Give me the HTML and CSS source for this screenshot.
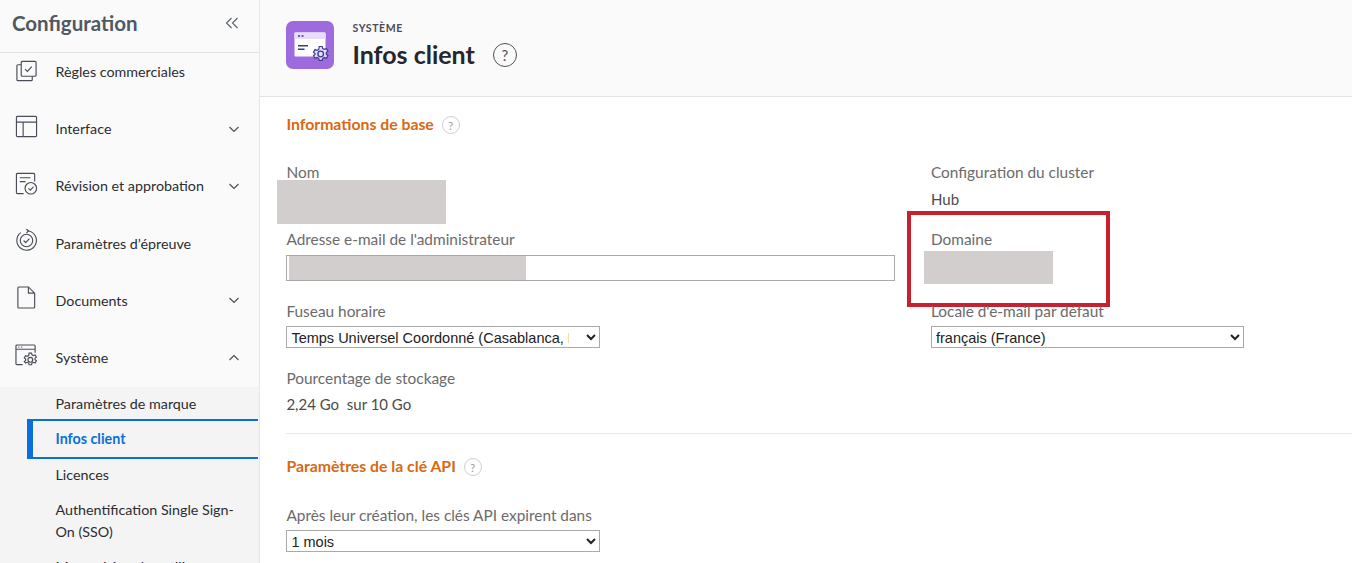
FILE: index.html
```html
<!DOCTYPE html>
<html lang="fr">
<head>
    <meta charset="UTF-8">
    <meta name="viewport" content="width=device-width, initial-scale=1.0">
    <title>Infos client</title>
    <link rel="stylesheet" href="styles.css">
</head>
<body>
    <aside class="sidebar">
        <div class="sidebar-head">
            <h2>Configuration</h2>
            <svg class="collapse" width="14" height="14" viewBox="0 0 14 14"><path d="M6.5 2 1.5 7l5 5M12.5 2l-5 5 5 5"/></svg>
        </div>
        <div class="sidebar-scroll">
            <ul class="nav">
                <li class="nav-item">
                    <svg class="nav-icon nav-icon-first" viewBox="0 0 24 24"><rect x="6.500" y="1.500" width="15.500" height="15.500" rx="1"/><path d="M6.500 5H3a1 1 0 0 0-1 1v14.500a1 1 0 0 0 1 1h14a1 1 0 0 0 1-1V17M10.500 9.500l2.500 2.500 4.500-5"/></svg>
                    <span>Règles commerciales</span>
                </li>
                <li class="nav-item">
                    <svg class="nav-icon" viewBox="0 0 24 24"><rect x="1.500" y="1.500" width="21" height="21" rx="1"/><path d="M1.500 7.500h21M8.500 7.500v15"/></svg>
                    <span>Interface</span>
                    <svg class="chev" viewBox="0 0 12 12"><path d="M1.500 4 6 8.500 10.500 4"/></svg>
                </li>
                <li class="nav-item">
                    <svg class="nav-icon" viewBox="0 0 24 24"><path d="M9 22.500H2.500a1 1 0 0 1-1-1v-19a1 1 0 0 1 1-1h17a1 1 0 0 1 1 1V10M5 6h11M5 10h6"/><circle cx="16.500" cy="17" r="6"/><path d="m14 17 2 2 3.200-3.500"/></svg>
                    <span>Révision et approbation</span>
                    <svg class="chev" viewBox="0 0 12 12"><path d="M1.500 4 6 8.500 10.500 4"/></svg>
                </li>
                <li class="nav-item">
                    <svg class="nav-icon" viewBox="0 0 24 24"><path d="M13 1.800A10.200 10.200 0 1 1 6 3.800"/><path d="m11.500-.2 2.500 2-2 2.500"/><circle cx="12" cy="12" r="6.500"/><path d="m9 12 2.200 2.200L15 10"/></svg>
                    <span>Paramètres d’épreuve</span>
                </li>
                <li class="nav-item">
                    <svg class="nav-icon" viewBox="0 0 24 24"><path d="M14 1H4a1 1 0 0 0-1 1v20a1 1 0 0 0 1 1h15.500a1 1 0 0 0 1-1V7.500zM14 1v6.500h6.500"/></svg>
                    <span>Documents</span>
                    <svg class="chev" viewBox="0 0 12 12"><path d="M1.500 4 6 8.500 10.500 4"/></svg>
                </li>
                <li class="nav-item">
                    <svg class="nav-icon" viewBox="0 0 24 24"><path d="M8 21.500H2a1 1 0 0 1-1-1V2a1 1 0 0 1 1-1h18a1 1 0 0 1 1 1v7M1 5.500h20M3.500 3.300h1M6.500 3.300h1"/><circle cx="16" cy="16.500" r="2.500"/><path d="M14.700 9.500h2.600l.4 1.800 1.600.8 1.700-.7 1.300 2.200-1.400 1.200v1.600l1.400 1.200-1.300 2.200-1.700-.7-1.600.8-.4 1.800h-2.600l-.4-1.800-1.600-.8-1.700.7L9.700 18.400l1.400-1.200v-1.600l-1.400-1.200L11 12.200l1.700.7 1.600-.8z"/></svg>
                    <span>Système</span>
                    <svg class="chev" viewBox="0 0 12 12"><path d="M1.500 8 6 3.500 10.500 8"/></svg>
                </li>
            </ul>
            <ul class="subnav">
                <li class="sub-first">Paramètres de marque</li>
                <li class="sub-active">Infos client</li>
                <li class="sub-licence">Licences</li>
                <li class="sub-long">Authentification Single Sign-On (SSO)</li>
                <li class="sub-long sub-last">Mettre à jour les utilisateurs pour Single Sign-On</li>
            </ul>
        </div>
    </aside>

    <main class="main">
        <header class="page-head">
            <div class="page-tile">
                <svg width="48" height="48" viewBox="0 0 48 48">
                    <rect x="8.500" y="11.500" width="31" height="24" rx="1" fill="#fff"/>
                    <path d="M8.500 12.500a1 1 0 0 1 1-1h29a1 1 0 0 1 1 1V18h-31z" fill="#e8dcf8"/>
                    <path d="M12 15h2M15.500 15h2M12 24.700h10M12 28.300h6.500" stroke="#3d3a8c" stroke-width="1.500" fill="none"/>
                    <g transform="translate(.7 2)">
                        <path class="tile-gear" d="M32.500 23.500h3l.5 2 1.800.9 1.900-.8 1.500 2.500-1.600 1.400v1.800l1.600 1.400-1.500 2.500-1.900-.8-1.800.9-.5 2h-3l-.5-2-1.800-.9-1.900.8-1.500-2.500 1.600-1.400V30.500l-1.600-1.400 1.500-2.500 1.900.8 1.800-.9z"/>
                        <circle cx="34" cy="31" r="2.800" fill="none" stroke="#3d3a8c" stroke-width="1.300"/>
                    </g>
                </svg>
            </div>
            <div class="page-titles">
                <div class="eyebrow">SYSTÈME</div>
                <h1>Infos client</h1>
            </div>
            <span class="help-big">?</span>
        </header>

        <section class="section">
            <h3 class="section-title">Informations de base <span class="help">?</span></h3>
            <div class="form-grid">
                <div class="field">
                    <div class="label">Nom</div>
                    <div class="redact redact-name"></div>
                </div>
                <div class="field">
                    <div class="label">Configuration du cluster</div>
                    <div class="value">Hub</div>
                </div>
                <div class="field">
                    <div class="label">Adresse e-mail de l'administrateur</div>
                    <div class="fake-input"><div class="redact-email"></div></div>
                </div>
                <div class="field">
                    <div class="label">Domaine</div>
                    <div class="redact redact-domain"></div>
                    <div class="callout"></div>
                </div>
                <div class="field">
                    <div class="label label-select">Fuseau horaire</div>
                    <select class="select select-clip"><option>Temps Universel Coordonné (Casablanca, Monrovia, Reykjavik)</option></select>
                </div>
                <div class="field">
                    <div class="label label-select">Locale d'e-mail par défaut</div>
                    <select class="select"><option>français (France)</option></select>
                </div>
                <div class="field">
                    <div class="label">Pourcentage de stockage</div>
                    <div class="value value-storage">2,24 Go&nbsp; sur 10 Go</div>
                </div>
            </div>
        </section>

        <section class="section section-api">
            <h3 class="section-title">Paramètres de la clé API <span class="help">?</span></h3>
            <div class="label label-select">Après leur création, les clés API expirent dans</div>
            <select class="select"><option>1 mois</option></select>
        </section>
    </main>
</body>
</html>
```

FILE: styles.css
```css
* {
    box-sizing: border-box;
}
html, body {
    height: 100%;
}
body {
    margin: 0;
    display: flex;
    height: 563px;
    overflow: hidden;
    background-color: #fff;
    color: #2c2c33;
    font-family: "Lato", "Open Sans", sans-serif;
}
ul {
    list-style: none;
    margin: 0;
    padding: 0;
}

/* sidebar */
.sidebar {
    width: 260px;
    flex: none;
    display: flex;
    flex-direction: column;
    background-color: #fafafa;
    border-right: 1px solid #e6e6e6;
}
.sidebar-head {
    height: 53px;
    flex: none;
    display: flex;
    align-items: center;
    justify-content: space-between;
    padding: 0 20px 6px 12px;
    border-bottom: 1px solid #e1e1e1;
}
.sidebar-head h2 {
    margin: 0;
    font-size: 20.500px;
    font-weight: 700;
    color: #505862;
}
.collapse {
    fill: none;
    stroke: #5a5f69;
    stroke-width: 1.100;
}
.sidebar-scroll {
    flex: 1;
    overflow: hidden;
}
.nav {
    margin-top: -10px;
}
.nav-item {
    height: 57.200px;
    display: flex;
    align-items: center;
    padding-left: 15px;
    font-size: 14.300px;
}
.nav-item span {
    flex: 1;
    margin-left: 17.500px;
}
.nav-icon {
    width: 23px;
    height: 23px;
    margin-bottom: 5px;
    flex: none;
    fill: none;
    stroke: #4a4d57;
    stroke-width: 1.200;
}
.nav-icon-first {
    margin-bottom: 0;
}
.chev {
    width: 12px;
    height: 12px;
    margin-right: 19px;
    fill: none;
    stroke: #4a4d57;
    stroke-width: 1.100;
}
.subnav {
    margin-top: 0.800px;
    background-color: #f4f4f4;
    font-size: 14.300px;
    line-height: 22px;
}
.subnav li {
    padding-left: 55.500px;
    padding-right: 20px;
}
.sub-first {
    height: 32px;
    padding-top: 6px;
}
.subnav .sub-active {
    height: 40px;
    margin-left: 27px;
    margin-right: 1px;
    padding: 7px 0 0 22.500px;
    border: 2px solid #0a6fd8;
    border-left-width: 6px;
    border-right: none;
    color: #0a6fd8;
    font-weight: 700;
}
.sub-licence {
    height: 34px;
    padding-top: 5px;
}
.sub-long {
    padding-top: 6px;
    padding-bottom: 6px;
}
.subnav .sub-last {
    padding-top: 7px;
}

/* main area */
.main {
    flex: 1;
    min-width: 0;
}
.page-head {
    height: 97px;
    display: flex;
    align-items: flex-start;
    padding: 21px 0 0 26px;
    background-color: #fafafa;
    border-bottom: 1px solid #e4e4e4;
}
.page-tile {
    width: 48px;
    height: 48px;
    border-radius: 7px;
    background-color: #9e6bdf;
}
.page-tile svg {
    display: block;
}
.tile-gear {
    fill: #e8dcf8;
    stroke: #3d3a8c;
    stroke-width: 1.200;
}
.page-titles {
    margin-left: 18.500px;
}
.eyebrow {
    margin-top: 1px;
    font-size: 10.500px;
    line-height: 12px;
    letter-spacing: 0.600px;
    font-weight: 700;
    color: #4b4b55;
}
h1 {
    margin: 3px 0 0;
    font-size: 25px;
    line-height: 34px;
    font-weight: 700;
    color: #26262c;
}
.help-big {
    width: 24px;
    height: 24px;
    margin: 22px 0 0 18px;
    border: 1.500px solid #4f525c;
    border-radius: 50%;
    display: flex;
    align-items: center;
    justify-content: center;
    font-size: 15px;
    color: #4f525c;
}
.help {
    width: 18px;
    height: 18px;
    margin: 4px 0 0 8px;
    border: 1px solid #cfcfcf;
    border-radius: 50%;
    display: inline-flex;
    align-items: center;
    justify-content: center;
    font-size: 11px;
    font-weight: 400;
    color: #9a9a9a;
}

.section {
    margin-left: 26.400px;
}
.section-title {
    display: flex;
    align-items: center;
    height: 22px;
    margin: 15px 0 27px;
    font-size: 15.800px;
    font-weight: 700;
    color: #d8690f;
}
.form-grid {
    display: grid;
    grid-template-columns: 644.600px 1fr;
    grid-template-rows: 67px 72px 67px 66px;
    border-bottom: 1px solid #ebebeb;
}
.field {
    position: relative;
    min-width: 0;
}
.label {
    height: 22px;
    font-size: 15.400px;
    line-height: 22px;
    color: #6b6b6b;
}
.label-select {
    margin-bottom: 4px;
}
.value {
    margin-top: 5px;
    font-size: 15px;
    line-height: 22px;
    color: #4b4b4b;
}
.value-storage {
    margin-top: 4px;
}
.redact {
    position: absolute;
    background-color: #d1cecd;
}
.redact-name {
    left: -9.400px;
    top: 19px;
    width: 169px;
    height: 44px;
}
.redact-domain {
    left: -7px;
    top: 23px;
    width: 129px;
    height: 33px;
}
.callout {
    position: absolute;
    left: -24px;
    top: -17px;
    width: 203px;
    height: 96px;
    border: 4px solid #c8202f;
}
.fake-input {
    width: 608.600px;
    height: 26px;
    margin-top: 5px;
    padding-left: 2px;
    background-color: #fff;
    border: 1px solid #aaa;
}
.redact-email {
    width: 237px;
    height: 100%;
    background-color: #d1cecd;
}
.select {
    display: block;
    width: 313.400px;
    height: 22px;
    padding-top: 1px;
    background-color: #fff;
    border: 1px solid #aaa;
    border-radius: 0;
    font-family: "Liberation Sans", Arial, sans-serif;
    font-size: 14.500px;
    color: #222;
}
.select-clip {
    padding-right: 14px;
}
.section-api .section-title {
    margin: 20px 0 28px;
}
```
